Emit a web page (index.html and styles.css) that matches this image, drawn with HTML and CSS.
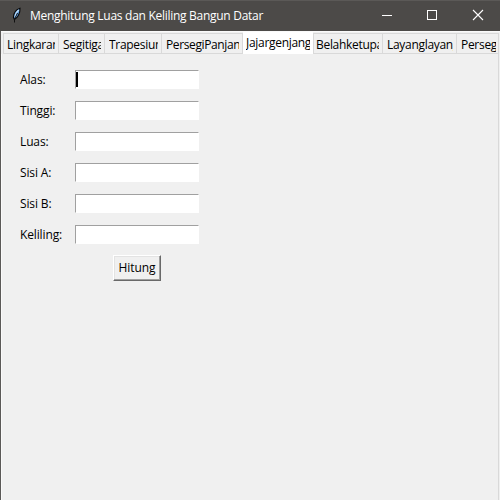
FILE: index.html
```html
<!DOCTYPE html>
<html lang="id">
<head>
<meta charset="utf-8">
<title>Menghitung Luas dan Keliling Bangun Datar</title>
<link rel="stylesheet" href="styles.css">
</head>
<body>
<div class="window">
  <header class="titlebar">
    <svg class="feather" width="12" height="18" viewBox="0 0 12 18">
      <path d="M9 1.3 C5.5 2.5 2.5 6 2.4 10.5 L3.4 12.5 C6.5 11 9.3 6.5 9 1.3Z" fill="#5b9be0" stroke="#080808" stroke-width="1.1"/>
      <path d="M7.9 3 C5.8 4.5 4.5 7 4 10" fill="none" stroke="#c2e1fa" stroke-width="1.1"/>
      <path d="M6.5 6 L3.5 12 V15.5" fill="none" stroke="#111" stroke-width="1"/>
    </svg>
    <h1 class="title">Menghitung Luas dan Keliling Bangun Datar</h1>
    <div class="controls">
      <svg width="46" height="30" viewBox="0 0 46 30"><path d="M18 14.5H28" stroke="#fff"/></svg>
      <svg width="46" height="30" viewBox="0 0 46 30"><rect x="17.5" y="9.5" width="9" height="9" fill="none" stroke="#fff"/></svg>
      <svg width="46" height="30" viewBox="0 0 46 30"><path d="M17 9L27 19M27 9L17 19" stroke="#fff" stroke-width="1.1"/></svg>
    </div>
  </header>
  <nav class="tabs">
    <div class="tab t1"><span>Lingkaran</span></div>
    <div class="tab t2"><span>Segitiga</span></div>
    <div class="tab t3"><span>Trapesium</span></div>
    <div class="tab t4"><span>PersegiPanjang</span></div>
    <div class="tab t5 active"><span>Jajargenjang</span></div>
    <div class="tab t6"><span>Belahketupat</span></div>
    <div class="tab t7"><span>Layanglayang</span></div>
    <div class="tab t8"><span>Persegi</span></div>
  </nav>
  <main class="pane">
    <div class="form">
      <label>Alas:</label><div class="entry"><i class="caret"></i></div>
      <label>Tinggi:</label><div class="entry"></div>
      <label>Luas:</label><div class="entry"></div>
      <label>Sisi A:</label><div class="entry"></div>
      <label>Sisi B:</label><div class="entry"></div>
      <label>Keliling:</label><div class="entry"></div>
    </div>
    <button class="button" type="button">Hitung</button>
  </main>
</div>
</body>
</html>
```
FILE: styles.css
```css
* { box-sizing: border-box; }
body { margin: 0; background: #f0f0f0; color: #000; font: 12px/16px "Open Sans", "Noto Sans", sans-serif; letter-spacing: -0.3px; overflow: hidden; }
.window { width: 500px; height: 500px; border-left: 1px solid #5b5957; display: flex; flex-direction: column; }
.titlebar { height: 31px; flex: none; margin-left: -1px; background: #4c4a48; border-top: 1px solid #5b5957; display: flex; align-items: flex-start; color: #fff; }
.feather { margin: 6px 0 0 11px; }
.title { margin: 7px 0 0 7px; font-size: 12px; font-weight: 400; line-height: 16px; white-space: nowrap; letter-spacing: -0.28px; }
.controls { display: flex; margin-left: auto; margin-right: -2px; }
.controls svg { display: block; }
.tabs { height: 23px; flex: none; display: flex; align-items: flex-end; padding-left: 2px; border-top: 1px solid #fafafa; }
.tab { height: 21px; border: 1px solid #d9d9d9; border-left: 0; padding: 3px 3px 0 4px; flex: none; }
.tab span { display: block; overflow: hidden; white-space: nowrap; height: 17px; }
.t1 { width: 56px; border-left: 1px solid #d9d9d9; padding-left: 3px; }
.t2 { width: 46px; }
.t3 { width: 57px; }
.t4 { width: 81px; letter-spacing: -0.38px; }
.t5 { width: 70px; }
.t6 { width: 70px; padding-left: 2px; border-left: 1px solid #d9d9d9; }
.t7 { width: 74px; }
.t8 { width: 42px; padding-right: 2px; }
.tab.active { height: 22px; background: #fff; border-color: #fff; padding: 2px 2px 0 3px; }
.pane { flex: 1; width: 498px; border-left: 1px solid #fafafa; border-right: 1px solid #d9d9d9; padding: 16px 0 0 18px; }
.form { display: grid; grid-template-columns: 55px 124px; grid-auto-rows: 19px; row-gap: 12px; letter-spacing: -0.13px; }
.form label { line-height: 20px; }
.entry { height: 19px; background: #fff; border: 1px solid; border-color: #a0a0a0 #fff #fff #a0a0a0; padding: 1px 0 0; }
.caret { display: block; width: 2px; height: 15px; background: #000; }
.button { display: block; width: 48px; height: 26px; margin: 11px 0 0 93px; padding: 0 0 1px; background: #f0f0f0; border: 1px solid; border-color: #fff #696969 #696969 #fff; box-shadow: inset -1px -1px #a0a0a0, inset 1px 1px #e3e3e3; font: inherit; letter-spacing: -0.1px; color: #000; }
```
